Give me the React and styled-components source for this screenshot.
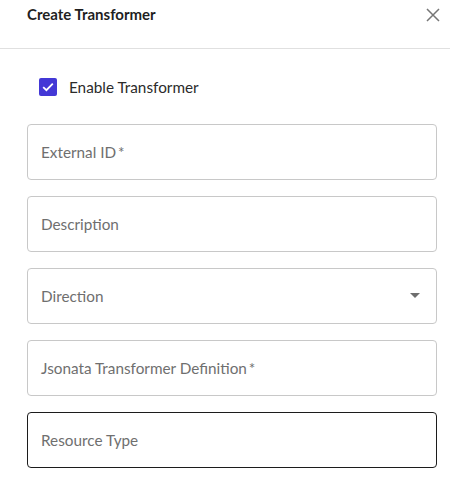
import React from "react";
import styled, { createGlobalStyle } from "styled-components";

const Global = createGlobalStyle`
  html, body {
    margin: 0;
    padding: 0;
    background: #ffffff;
  }
  body {
    font-family: Lato, "Open Sans", sans-serif;
  }
`;

const fields = [
  { label: "External ID", required: true },
  { label: "Description" },
  { label: "Direction", select: true },
  { label: "Jsonata Transformer Definition", required: true },
  { label: "Resource Type", active: true },
];

const App = () => {
  return (
    <Panel>
      <Global />
      <Header>
        <Title>Create Transformer</Title>
        <Close aria-label="close">
          <svg width="14" height="14" viewBox="0 0 14 14">
            <path d="M1 1 L13 13 M13 1 L1 13" stroke="#767676" strokeWidth="1.5" fill="none" />
          </svg>
        </Close>
      </Header>
      <Body>
        <CheckRow>
          <Box>
            <svg width="12" height="10" viewBox="0 0 12 10">
              <path d="M1.2 5.2 L4.4 8.2 L10.8 1.6" stroke="#ffffff" strokeWidth="1.8" fill="none" />
            </svg>
          </Box>
          <CheckLabel>Enable Transformer</CheckLabel>
        </CheckRow>
        <Fields>
          {fields.map((f) => (
            <Field key={f.label} $active={f.active}>
              <Placeholder>
                {f.label}
                {f.required && "\u2009*"}
              </Placeholder>
              {f.select && (
                <svg width="10" height="5" viewBox="0 0 10 5">
                  <path d="M0 0 L10 0 L5 5 Z" fill="#6e6e6e" />
                </svg>
              )}
            </Field>
          ))}
        </Fields>
      </Body>
    </Panel>
  );
};

const Panel = styled.div`
  width: 450px;
  height: 480px;
  background: #ffffff;
  overflow: hidden;
`;

const Header = styled.div`
  display: flex;
  justify-content: space-between;
  align-items: flex-start;
  height: 49px;
  padding: 4px 9px 0 27px;
  box-sizing: border-box;
  border-bottom: 1px solid #e0e0e0;
`;

const Title = styled.h2`
  margin: 0;
  font-size: 15px;
  font-weight: 700;
  line-height: 20px;
  color: #1f1f1f;
`;

const Close = styled.button`
  display: flex;
  align-items: center;
  justify-content: center;
  width: 16px;
  height: 16px;
  margin-top: 3px;
  padding: 0;
  border: 0;
  background: none;
  cursor: pointer;
`;

const Body = styled.div`
  padding: 29px 13px 0 27px;
`;

const CheckRow = styled.label`
  display: flex;
  align-items: center;
  gap: 12px;
  height: 18px;
  margin-left: 12px;
  margin-bottom: 28px;
`;

const Box = styled.span`
  display: flex;
  align-items: center;
  justify-content: center;
  width: 18px;
  height: 18px;
  border-radius: 2px;
  background: #4338d6;
`;

const CheckLabel = styled.span`
  font-size: 15.3px;
  line-height: 20px;
  color: #2b2b2b;
`;

const Fields = styled.div`
  display: flex;
  flex-direction: column;
  gap: 16px;
`;

const Field = styled.div`
  display: flex;
  align-items: center;
  justify-content: space-between;
  height: 56px;
  padding: 0 16px 1px 13px;
  box-sizing: border-box;
  border: 1px solid ${(p) => (p.$active ? "#1c1c1c" : "#c8c8c8")};
  border-radius: 4px;
`;

const Placeholder = styled.span`
  font-size: 15.3px;
  line-height: 20px;
  color: #6f6f6f;
`;

export default App;
